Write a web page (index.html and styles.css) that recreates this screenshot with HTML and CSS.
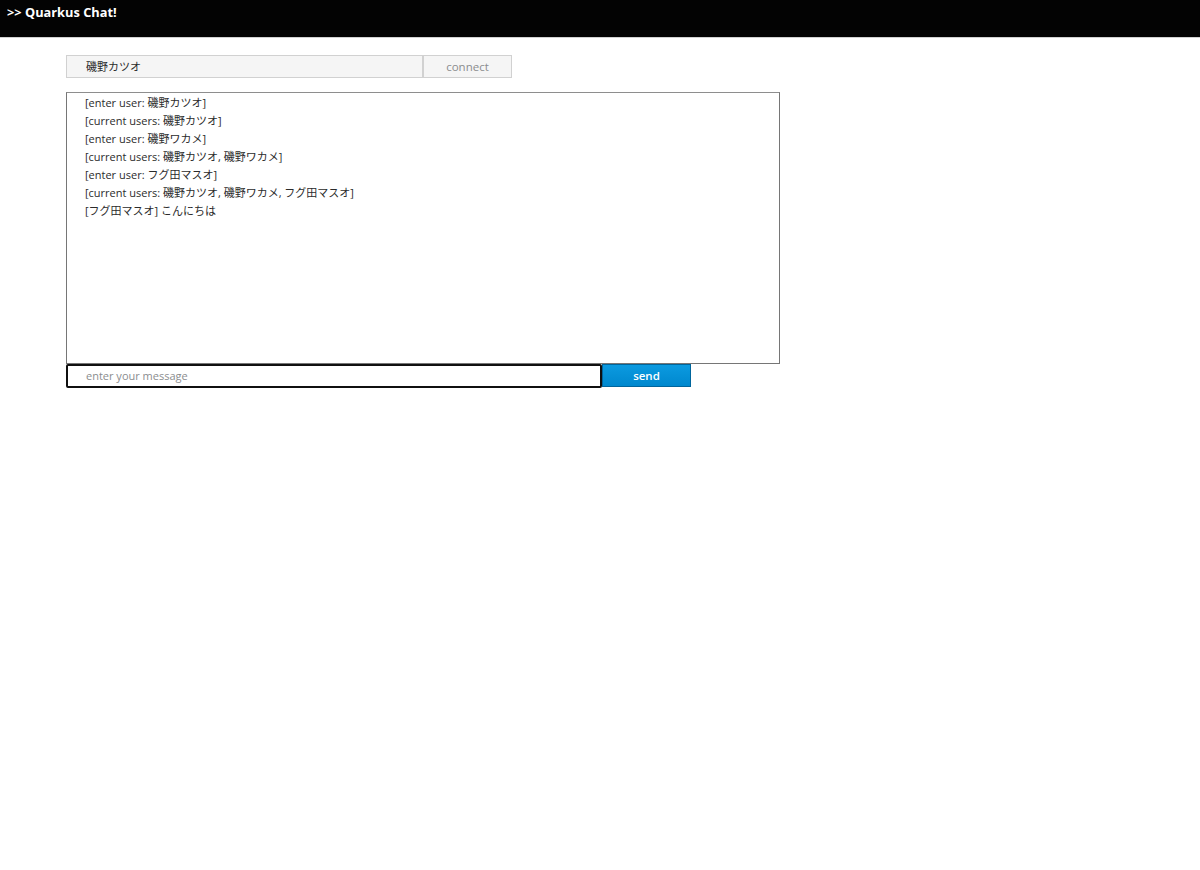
FILE: index.html
```html
<!DOCTYPE html>
<html>
<head>
<meta charset="utf-8">
<link rel="stylesheet" href="styles.css">
</head>
<body>
<nav class="navbar"><span class="brand">&gt;&gt; Quarkus Chat!</span></nav>
<main class="container">
  <div class="row connect-row">
    <input class="name-input" type="text" value="磯野カツオ">
    <button class="btn btn-default">connect</button>
  </div>
  <div class="chat">
    <div class="line">[enter user: 磯野カツオ]</div>
    <div class="line">[current users: 磯野カツオ]</div>
    <div class="line">[enter user: 磯野ワカメ]</div>
    <div class="line">[current users: 磯野カツオ, 磯野ワカメ]</div>
    <div class="line">[enter user: フグ田マスオ]</div>
    <div class="line">[current users: 磯野カツオ, 磯野ワカメ, フグ田マスオ]</div>
    <div class="line">[フグ田マスオ] こんにちは</div>
  </div>
  <div class="row send-row">
    <input class="msg-input" type="text" placeholder="enter your message">
    <button class="btn btn-primary">send</button>
  </div>
</main>
</body>
</html>
```
FILE: styles.css
```css
* { box-sizing: border-box; }
body {
  margin: 0;
  font-family: "Open Sans", "Noto Sans CJK JP", sans-serif;
  font-size: 11px;
  color: #2b2b2b;
  background: #fff;
}
.navbar {
  background: #030303;
  height: 38px;
  padding: 3px 7px 0;
  border-bottom: 1px solid #d1d1d1;
}
.brand {
  color: #fff;
  font-weight: 700;
  font-size: 12.8px;
  line-height: 18px;
}
.container {
  padding: 17px 0 0 66px;
}
.row { display: flex; }
.name-input {
  width: 357px;
  height: 23px;
  background: #f5f5f5;
  border: 1px solid #d1d1d1;
  padding: 0 19px 1px;
  font-family: inherit;
  font-size: 11px;
  color: #2b2b2b;
  outline: none;
}
.btn {
  width: 89px;
  height: 23px;
  font-family: inherit;
  font-size: 11.5px;
  padding: 0 0 1px;
}
.btn-default {
  background: #f5f5f5;
  border: 1px solid #d1d1d1;
  color: #8b8d8f;
}
.btn-primary {
  background: linear-gradient(#0b9ae0, #0088ce);
  border: 1px solid #00659c;
  color: #fff;
  font-weight: 600;
}
.chat {
  margin-top: 14px;
  width: 714px;
  height: 272px;
  border: 1px solid #767676;
  border-top-color: #8e8e8e;
  padding: 1px 18px;
}
.line {
  line-height: 18px;
}
.msg-input {
  width: 536px;
  height: 24px;
  border: 2px solid #101010;
  border-radius: 2px;
  padding: 0 18px 1px;
  font-family: inherit;
  font-size: 11px;
  outline: none;
}
.msg-input::placeholder { color: #8b8d8f; }
```
